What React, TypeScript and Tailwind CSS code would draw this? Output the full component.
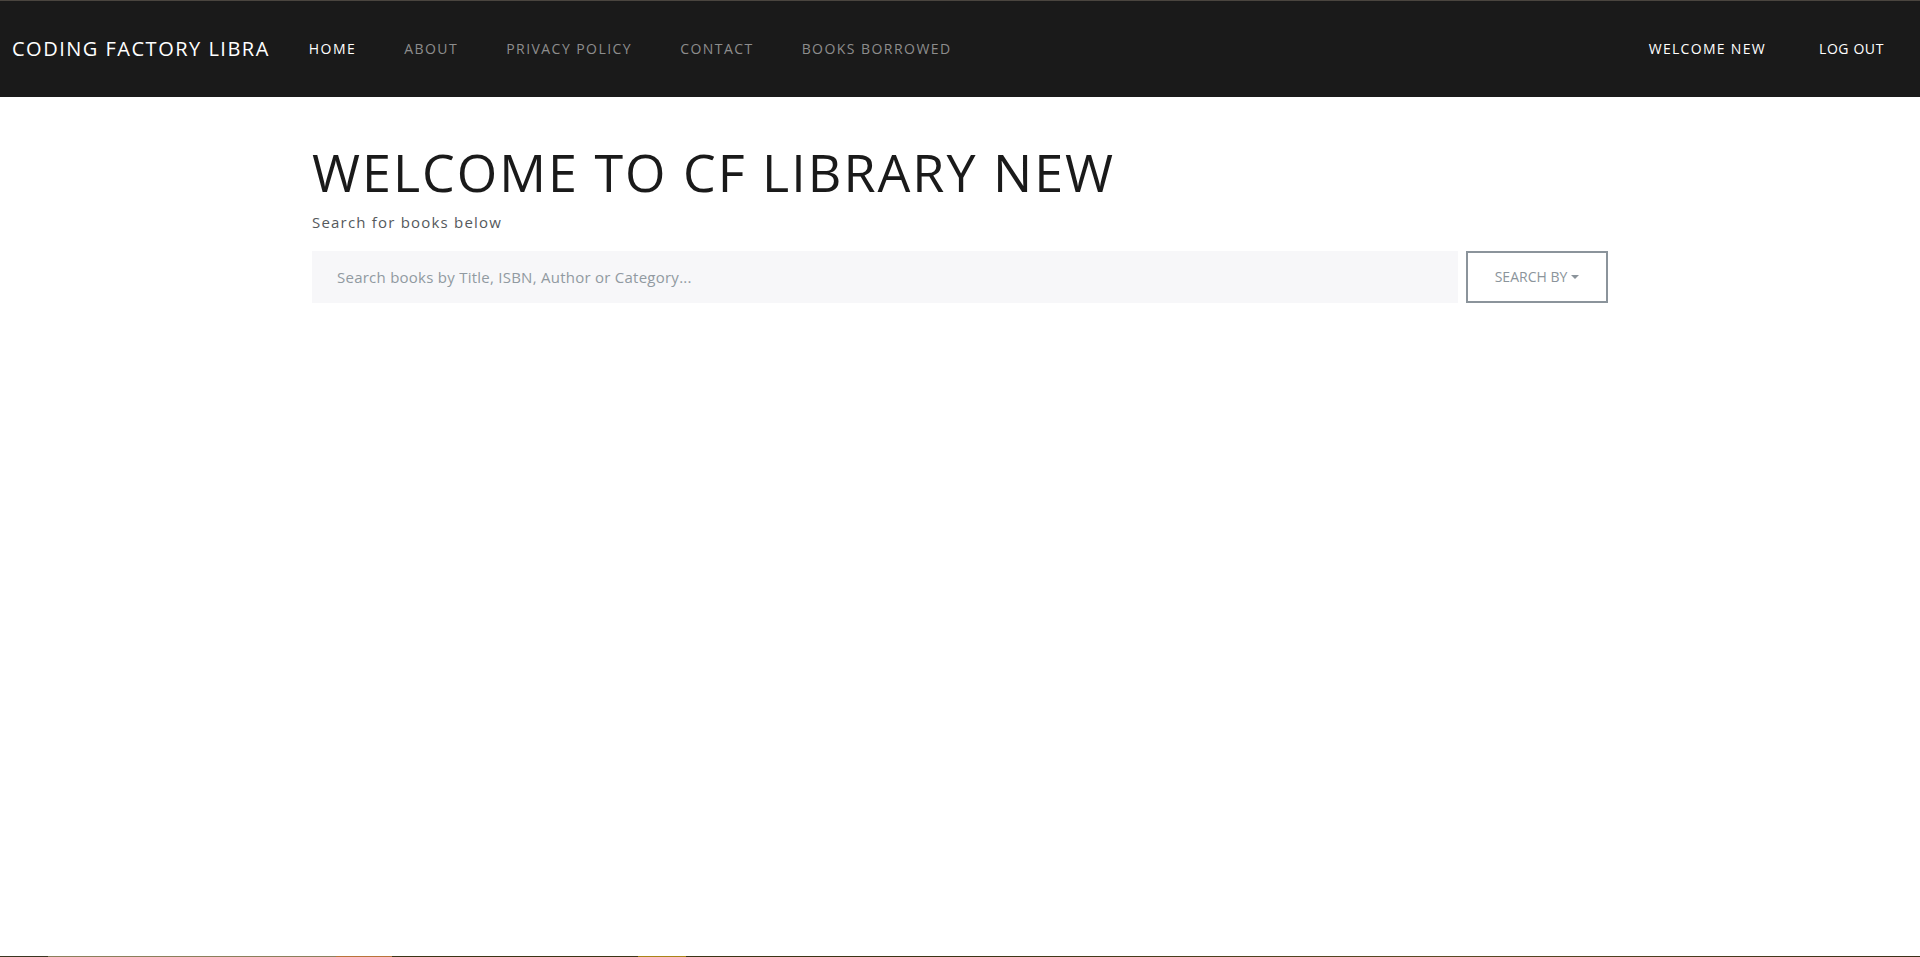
import React from "react";

const font = { fontFamily: '"Open Sans", "Noto Sans", sans-serif' };

export default function App() {
  return (
    <div className="min-h-[957px] w-full bg-white flex flex-col" style={font}>
      <div className="h-px w-full bg-[#4a453f]" />
      <nav className="h-[96px] w-full bg-[#1a1a1a] flex items-center">
        <a className="pl-[12px] text-[20px] leading-none text-white tracking-[1.5px] mr-[39px] whitespace-nowrap">
          CODING FACTORY LIBRA
        </a>
        <ul className="flex items-center gap-[48px] text-[14px] leading-none tracking-[1.45px] whitespace-nowrap">
          <li className="text-white">HOME</li>
          <li className="text-[#8d8d8d]">ABOUT</li>
          <li className="text-[#8d8d8d]">PRIVACY POLICY</li>
          <li className="text-[#8d8d8d]">CONTACT</li>
          <li className="text-[#8d8d8d]">BOOKS BORROWED</li>
        </ul>
        <ul className="ml-auto flex items-center gap-[53px] pr-[36px] text-[14px] leading-none tracking-[1.3px] text-white whitespace-nowrap">
          <li>WELCOME NEW</li>
          <li className="tracking-[0.6px]">LOG OUT</li>
        </ul>
      </nav>
      <main className="mx-auto w-full max-w-[1320px] px-[12px]">
        <h1 className="mt-[44px] text-[52px] leading-[1.2] font-normal text-[#1a1a1a] tracking-[2px]">
          WELCOME TO CF LIBRARY NEW
        </h1>
        <p className="mt-[8px] text-[15px] leading-[1.5] text-[#55595c] tracking-[1.2px]">
          Search for books below
        </p>
        <div className="mt-[17px] flex gap-[8px]">
          <input
            className="h-[52px] flex-1 bg-[#f7f7f9] pl-[25px] text-[15px] tracking-[0.25px] text-[#55595c] outline-none placeholder:text-[#919aa1]"
            placeholder="Search books by Title, ISBN, Author or Category..."
            style={font}
          />
          <button className="h-[52px] w-[142px] border-2 border-[#8b949b] bg-white flex items-center justify-center gap-[4px] text-[14px] text-[#8b949b] leading-none">
            <span>SEARCH BY</span>
            <span className="inline-block w-0 h-0 border-l-[4px] border-r-[4px] border-t-[4px] border-l-transparent border-r-transparent border-t-[#8b949b]" />
          </button>
        </div>
      </main>
      <div className="flex-1" />
      <div className="h-px w-full flex">
        <div className="w-[48px] bg-[#3a3520]" />
        <div className="w-[288px] bg-[#8a7f5c]" />
        <div className="w-[56px] bg-[#b8743a]" />
        <div className="w-[246px] bg-[#3b3416]" />
        <div className="w-[48px] bg-[#a88418]" />
        <div className="w-[274px] bg-[#3b3416]" />
        <div className="flex-1 bg-gradient-to-r from-[#3b3416] via-[#5a4a25] to-[#3a3018]" />
      </div>
    </div>
  );
}
